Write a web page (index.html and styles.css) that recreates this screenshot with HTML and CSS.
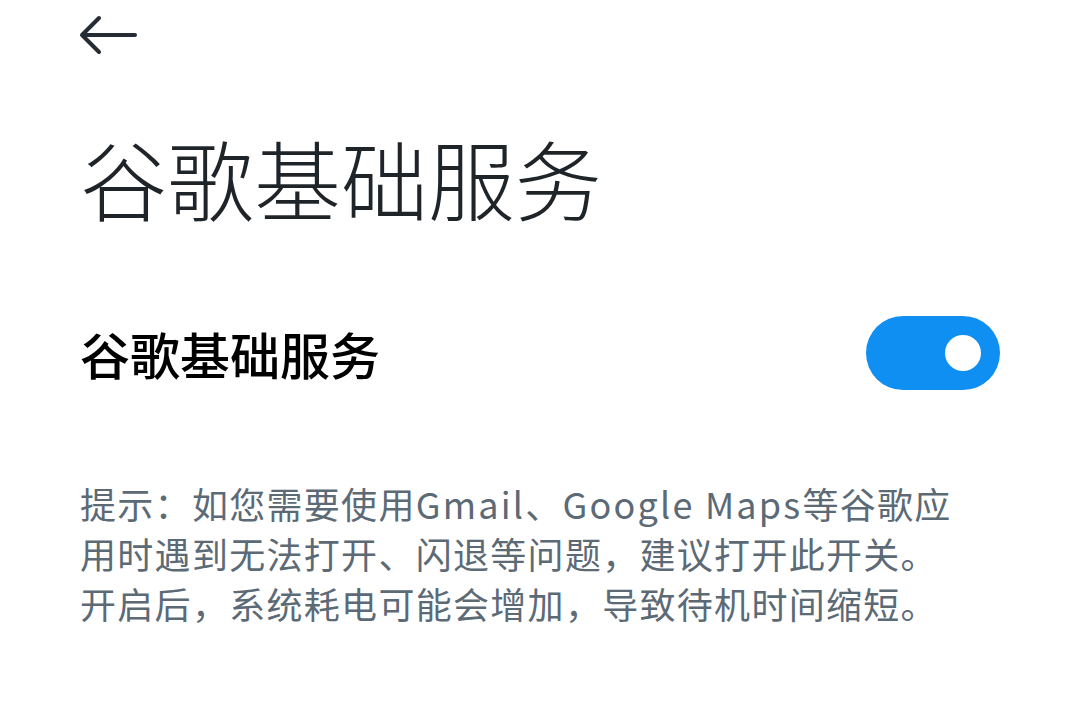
FILE: index.html
```html
<!DOCTYPE html>
<html lang="zh-CN">
<head>
<meta charset="utf-8">
<link rel="stylesheet" href="styles.css">
</head>
<body>
<div class="page">
  <header class="topbar">
    <svg class="back" width="60" height="44" viewBox="0 0 60 44" aria-label="返回">
      <path d="M20 3 L3 20 L20 37 M3 20 H56" fill="none" stroke="#262c33" stroke-width="4" stroke-linecap="round" stroke-linejoin="round"/>
    </svg>
  </header>
  <h1 class="title">谷歌基础服务</h1>
  <div class="row">
    <div class="row-label">谷歌基础服务</div>
    <div class="toggle on"><span class="knob"></span></div>
  </div>
  <p class="hint">提示：如您需要使用<span class="latin">Gmail</span>、<span class="latin">Google Maps</span>等谷歌应<br>用时遇到无法打开、闪退等问题，建议打开此开关。<br>开启后，系统耗电可能会增加，导致待机时间缩短。</p>
</div>
</body>
</html>
```
FILE: styles.css
```css
html, body {
  margin: 0;
  padding: 0;
  background: #ffffff;
}
body {
  font-family: "Noto Sans CJK SC", "Noto Sans", sans-serif;
}
.page {
  width: 1080px;
  height: 712px;
  box-sizing: border-box;
  padding: 15px 80px 0 80px;
  display: flex;
  flex-direction: column;
}
.topbar {
  height: 44px;
  display: flex;
  align-items: center;
}
.back {
  display: block;
  margin-left: -1px;
}
.title {
  margin: 62px 0 0 0;
  font-size: 87px;
  font-weight: 300;
  line-height: 112px;
  color: #1f2429;
  letter-spacing: 0;
}
.row {
  margin-top: 83px;
  display: flex;
  align-items: center;
  justify-content: space-between;
  height: 74px;
}
.row-label {
  font-size: 50px;
  font-weight: 500;
  color: #000000;
  line-height: 74px;
}
.toggle {
  width: 134px;
  height: 74px;
  border-radius: 37px;
  background: #0f8ff2;
  position: relative;
}
.knob {
  position: absolute;
  width: 36px;
  height: 36px;
  border-radius: 50%;
  background: #ffffff;
  right: 19px;
  top: 19px;
}
.hint {
  margin: 88px 0 0 0;
  font-size: 36px;
  letter-spacing: 1.3px;
  line-height: 50px;
  color: #5c6a76;
  white-space: nowrap;
}
.latin {
  letter-spacing: 2.2px;
}
```
